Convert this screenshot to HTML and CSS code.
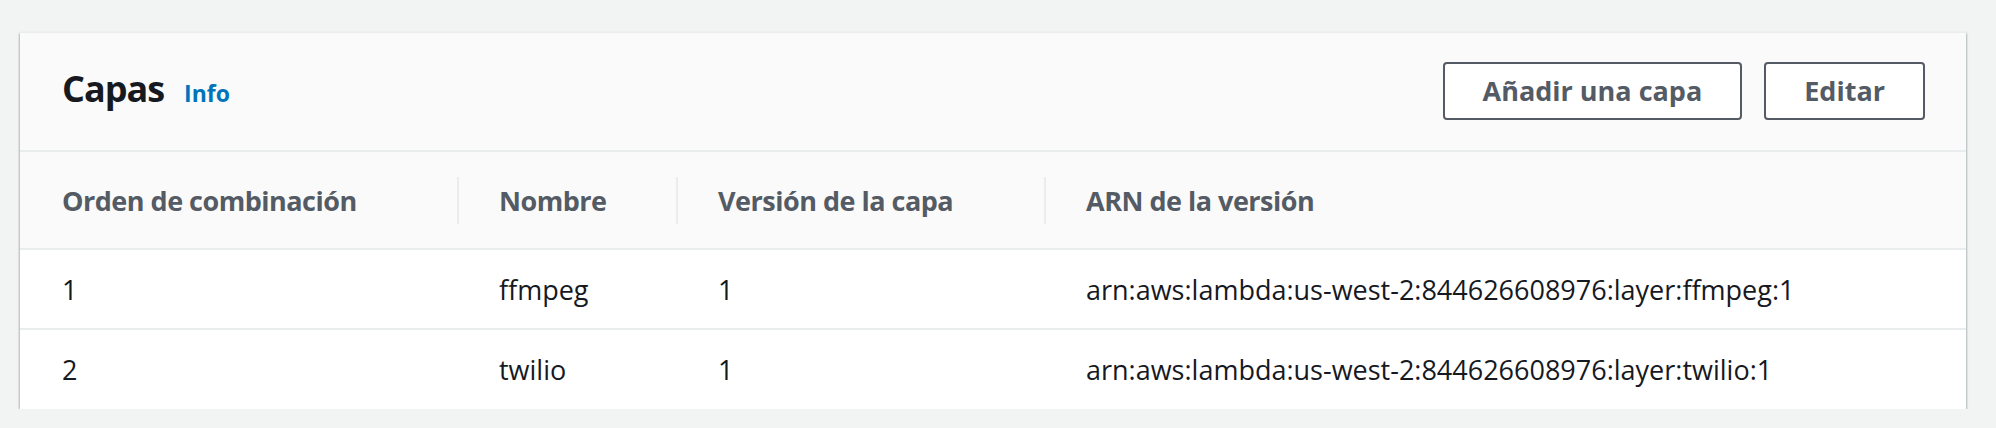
FILE: index.html
```html
<!DOCTYPE html>
<html lang="es">
<head>
<meta charset="utf-8">
<title>Capas</title>
<link rel="stylesheet" href="styles.css">
</head>
<body>
<section class="card">
  <header class="card-header">
    <div class="title-group">
      <h2 class="title">Capas</h2>
      <a class="info" href="#">Info</a>
    </div>
    <div class="actions">
      <button class="btn">Añadir una capa</button>
      <button class="btn">Editar</button>
    </div>
  </header>
  <table class="layers">
    <colgroup>
      <col class="c1"><col class="c2"><col class="c3"><col class="c4">
    </colgroup>
    <thead>
      <tr>
        <th><span class="th-in">Orden de combinación</span></th>
        <th class="sep"><span class="th-in">Nombre</span></th>
        <th class="sep"><span class="th-in">Versión de la capa</span></th>
        <th class="sep"><span class="th-in">ARN de la versión</span></th>
      </tr>
    </thead>
    <tbody>
      <tr>
        <td>1</td>
        <td>ffmpeg</td>
        <td>1</td>
        <td>arn:aws:lambda:us-west-2:844626608976:layer:ffmpeg:1</td>
      </tr>
      <tr>
        <td>2</td>
        <td>twilio</td>
        <td>1</td>
        <td>arn:aws:lambda:us-west-2:844626608976:layer:twilio:1</td>
      </tr>
    </tbody>
  </table>
</section>
</body>
</html>
```
FILE: styles.css
```css
* { box-sizing: border-box; }
html, body { margin: 0; }
body {
  background: #f2f3f3;
  padding: 32px 30px 0 20px;
  font-family: "Open Sans", "Noto Sans", sans-serif;
  color: #16191f;
}
.card {
  background: #ffffff;
  border-top: 1px solid #eaeded;
  box-shadow: 0 2px 2px 0 rgba(0, 28, 36, 0.3), 1px 1px 2px 0 rgba(0, 28, 36, 0.15), -1px 1px 2px 0 rgba(0, 28, 36, 0.15);
}
.card-header {
  background: #fafafa;
  height: 119px;
  border-bottom: 2px solid #eaeded;
  display: flex;
  align-items: center;
  justify-content: space-between;
  padding: 0 41px 4px 42px;
}
.title-group {
  display: flex;
  align-items: baseline;
  gap: 20px;
}
.title {
  margin: 0;
  font-size: 36px;
  font-weight: 700;
  letter-spacing: -1px;
  color: #16191f;
  line-height: 1;
}
.info {
  font-size: 23px;
  font-weight: 700;
  color: #0073bb;
  text-decoration: none;
}
.actions {
  display: flex;
  gap: 22px;
  margin-top: 2px;
}
.btn {
  height: 58px;
  padding: 0 38px;
  background: #ffffff;
  border: 2px solid #545b64;
  border-radius: 4px;
  font-family: inherit;
  font-size: 27px;
  font-weight: 700;
  color: #545b64;
}
.layers {
  width: 100%;
  border-collapse: collapse;
  table-layout: fixed;
}
.c1 { width: 437px; }
.c2 { width: 219px; }
.c3 { width: 368px; }
.layers th {
  background: #fafafa;
  height: 97px;
  padding: 0;
  text-align: left;
  font-size: 27px;
  font-weight: 700;
  letter-spacing: -0.5px;
  color: #545b64;
  border-bottom: 2px solid #eaeded;
}
.th-in {
  display: flex;
  align-items: center;
  height: 47px;
  padding-left: 42px;
}
.layers th.sep .th-in {
  border-left: 2px solid #eaeded;
  padding-left: 40px;
}
.layers td {
  height: 80px;
  padding: 0 0 0 42px;
  font-size: 27px;
  color: #16191f;
  border-bottom: 2px solid #eaeded;
  white-space: nowrap;
}
.layers tbody tr:last-child td {
  border-bottom: none;
  height: 80px;
}
```
